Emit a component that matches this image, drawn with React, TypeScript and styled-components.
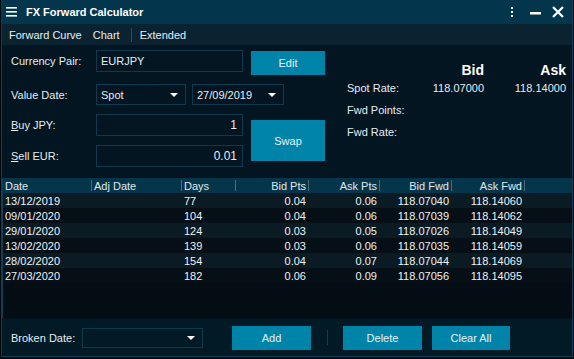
import styled, { createGlobalStyle } from 'styled-components'

const GlobalStyle = createGlobalStyle`
  html, body {
    margin: 0;
    padding: 0;
    background: #00070b;
  }
  body {
    font-family: 'Liberation Sans', Arial, sans-serif;
    font-size: 11px;
    color: #e6eef2;
  }
`

const Window = styled.div`
  margin: 0 0 0 1px;
  width: 570px;
  height: 356px;
  border: 1px solid #0d4058;
  border-top: none;
  display: flex;
  flex-direction: column;
  background: #021520;
  overflow: hidden;
`

const TitleBar = styled.div`
  height: 24px;
  background: #03354d;
  display: flex;
  align-items: center;
  padding: 0 8px 0 4px;
  gap: 9px;
`

const Title = styled.div`
  font-weight: bold;
  font-size: 11px;
  color: #fff;
  flex: 1;
`

const TitleIcons = styled.div`
  display: flex;
  align-items: center;
  gap: 10px;
`

const TabBar = styled.div`
  height: 21px;
  background: #0b2330;
  display: flex;
  align-items: center;
  padding-left: 7px;
`

const Tab = styled.span`
  font-size: 11px;
  color: #e6eef2;
  margin-right: 11px;
`

const TabDivider = styled.span`
  width: 1px;
  height: 14px;
  background: #1a5470;
  margin-right: 8px;
`

const FormArea = styled.div`
  height: 130px;
  display: flex;
  padding-left: 9px;
`

const FormGrid = styled.div`
  display: grid;
  grid-template-columns: 85px 147px 8px 74px;
  grid-template-rows: 34px 30px 31px 22px;
  padding-top: 5px;
`

const Label = styled.label<{ $row: number }>`
  grid-column: 1;
  grid-row: ${(p) => p.$row};
  align-self: start;
  line-height: 22px;
  font-size: 11px;
`

const Key = styled.span`
  text-decoration: underline;
`

const Input = styled.div<{ $row: number; $right?: boolean }>`
  grid-column: 2;
  grid-row: ${(p) => p.$row};
  align-self: start;
  box-sizing: border-box;
  height: 22px;
  border: 1px solid #0e3a50;
  padding: 0 5px 0 4px;
  display: flex;
  align-items: center;
  justify-content: ${(p) => (p.$right ? 'flex-end' : 'flex-start')};
  font-size: ${(p) => (p.$right ? '12px' : '11px')};
`

const SelectRow = styled.div`
  grid-column: 2 / span 3;
  grid-row: 2;
  align-self: start;
  display: flex;
  gap: 6px;
`

const Select = styled.div<{ $w: number }>`
  box-sizing: border-box;
  width: ${(p) => p.$w}px;
  height: 21px;
  border: 1px solid #0e3a50;
  display: flex;
  align-items: center;
  justify-content: space-between;
  padding: 0 7px 0 4px;
  font-size: 11px;
`

const Caret = styled.span`
  width: 0;
  height: 0;
  border-left: 4px solid transparent;
  border-right: 4px solid transparent;
  border-top: 4px solid #fff;
`

const Button = styled.div<{ $w?: number; $h?: number }>`
  width: ${(p) => p.$w ?? 74}px;
  height: ${(p) => p.$h ?? 24}px;
  background: #0083a8;
  color: #e6f2f6;
  display: flex;
  align-items: center;
  justify-content: center;
  font-size: 11px;
`

const EditCell = styled.div`
  grid-column: 4;
  grid-row: 1;
  margin-top: 1px;
`

const SwapCell = styled.div`
  grid-column: 4;
  grid-row: 3 / span 2;
  margin-top: 6px;
`

const RatePanel = styled.div`
  margin-left: 22px;
  padding-top: 17px;
  display: grid;
  grid-template-columns: 67px 70px 82px;
  grid-template-rows: 15px repeat(3, 22px);
  align-items: center;
`

const RateHead = styled.div`
  font-weight: bold;
  font-size: 14px;
  color: #fff;
  text-align: right;
`

const RateLabel = styled.div`
  font-size: 11px;
`

const RateValue = styled.div`
  font-size: 11px;
  text-align: right;
`

const Table = styled.div`
  flex: 1;
  margin-top: 3px;
  background: #030d13;
  border-left: 1px solid #0d4058;
  display: flex;
  flex-direction: column;
`

const cols = '89px 90px 54px 73px 71px 72px 73px 1fr'

const HeadRow = styled.div`
  display: grid;
  grid-template-columns: ${cols};
  height: 15px;
  background: #05354b;
  align-items: center;
`

const HeadCell = styled.div<{ $right?: boolean; $last?: boolean }>`
  height: 15px;
  display: flex;
  align-items: center;
  justify-content: ${(p) => (p.$right ? 'flex-end' : 'flex-start')};
  padding: 0 3px 0 2px;
  box-sizing: border-box;
  font-size: 11px;
  color: #e0e8ec;
  position: relative;
  ${(p) =>
    p.$last
      ? ''
      : `&::after {
    content: '';
    position: absolute;
    right: 0;
    top: 2px;
    width: 1px;
    height: 11px;
    background: #4d6a78;
  }`}
`

const Row = styled.div<{ $odd: boolean }>`
  display: grid;
  grid-template-columns: ${cols};
  height: 15px;
  align-items: center;
  background: ${(p) => (p.$odd ? '#0b1b23' : '#050f15')};
`

const Cell = styled.div<{ $right?: boolean }>`
  padding: 0 3px 0 2px;
  text-align: ${(p) => (p.$right ? 'right' : 'left')};
  font-size: 11px;
  color: #eef3f6;
`

const BottomBar = styled.div`
  height: 37px;
  margin-top: 1px;
  background: #011a26;
  display: flex;
  align-items: center;
  padding-left: 9px;
`

const BottomLabel = styled.span`
  font-size: 11px;
  width: 71px;
`

const BrokenSelect = styled(Select)`
  height: 20px;
  margin-right: 29px;
`

const BarDivider = styled.span`
  width: 1px;
  height: 15px;
  background: #123d50;
  margin: 0 15px 0 16px;
`

const rows = [
  ['13/12/2019', '', '77', '0.04', '0.06', '118.07040', '118.14060'],
  ['09/01/2020', '', '104', '0.04', '0.06', '118.07039', '118.14062'],
  ['29/01/2020', '', '124', '0.03', '0.05', '118.07026', '118.14049'],
  ['13/02/2020', '', '139', '0.03', '0.06', '118.07035', '118.14059'],
  ['28/02/2020', '', '154', '0.04', '0.07', '118.07044', '118.14069'],
  ['27/03/2020', '', '182', '0.06', '0.09', '118.07056', '118.14095'],
]

const headers = ['Date', 'Adj Date', 'Days', 'Bid Pts', 'Ask Pts', 'Bid Fwd', 'Ask Fwd']

const App = () => {
  return (
    <>
      <GlobalStyle />
      <Window>
        <TitleBar>
          <svg width="11" height="10" viewBox="0 0 11 10">
            <rect x="0" y="0" width="11" height="1.6" fill="#fff" />
            <rect x="0" y="4" width="11" height="1.6" fill="#fff" />
            <rect x="0" y="8" width="11" height="1.6" fill="#fff" />
          </svg>
          <Title>FX Forward Calculator</Title>
          <TitleIcons>
            <svg width="4" height="12" viewBox="0 0 4 12">
              <rect x="1" y="1" width="2" height="2" fill="#fff" />
              <rect x="1" y="5" width="2" height="2" fill="#fff" />
              <rect x="1" y="9" width="2" height="2" fill="#fff" />
            </svg>
            <svg width="12" height="12" viewBox="0 0 12 12" style={{ marginLeft: 6 }}>
              <rect x="0" y="6" width="11" height="2.5" fill="#fff" />
            </svg>
            <svg width="12" height="12" viewBox="0 0 12 12">
              <path d="M1 1 L11 11 M11 1 L1 11" stroke="#fff" strokeWidth="2.2" />
            </svg>
          </TitleIcons>
        </TitleBar>
        <TabBar>
          <Tab>Forward Curve</Tab>
          <Tab>Chart</Tab>
          <TabDivider />
          <Tab>Extended</Tab>
        </TabBar>
        <FormArea>
          <FormGrid>
            <Label $row={1}>Currency Pair:</Label>
            <Input $row={1}>EURJPY</Input>
            <EditCell>
              <Button>Edit</Button>
            </EditCell>
            <Label $row={2}>Value Date:</Label>
            <SelectRow>
              <Select $w={90}>
                Spot
                <Caret />
              </Select>
              <Select $w={92}>
                27/09/2019
                <Caret />
              </Select>
            </SelectRow>
            <Label $row={3}>
              <Key>B</Key>uy JPY:
            </Label>
            <Input $row={3} $right>
              1
            </Input>
            <SwapCell>
              <Button $h={41}>Swap</Button>
            </SwapCell>
            <Label $row={4}>
              <Key>S</Key>ell EUR:
            </Label>
            <Input $row={4} $right>
              0.01
            </Input>
          </FormGrid>
          <RatePanel>
            <div />
            <RateHead>Bid</RateHead>
            <RateHead>Ask</RateHead>
            <RateLabel>Spot Rate:</RateLabel>
            <RateValue>118.07000</RateValue>
            <RateValue>118.14000</RateValue>
            <RateLabel>Fwd Points:</RateLabel>
            <RateValue />
            <RateValue />
            <RateLabel>Fwd Rate:</RateLabel>
            <RateValue />
            <RateValue />
          </RatePanel>
        </FormArea>
        <Table>
          <HeadRow>
            {headers.map((h, i) => (
              <HeadCell key={h} $right={i > 2}>
                {h}
              </HeadCell>
            ))}
            <HeadCell $last />
          </HeadRow>
          {rows.map((r, i) => (
            <Row key={r[0]} $odd={i % 2 === 0}>
              {r.map((c, j) => (
                <Cell key={j} $right={j > 2}>
                  {c}
                </Cell>
              ))}
              <Cell />
            </Row>
          ))}
        </Table>
        <BottomBar>
          <BottomLabel>Broken Date:</BottomLabel>
          <BrokenSelect $w={121}>
            <span />
            <Caret />
          </BrokenSelect>
          <Button $w={79}>Add</Button>
          <BarDivider />
          <Button $w={79}>Delete</Button>
          <Button $w={78} style={{ marginLeft: 10 }}>
            Clear All
          </Button>
        </BottomBar>
      </Window>
    </>
  )
}

export default App
